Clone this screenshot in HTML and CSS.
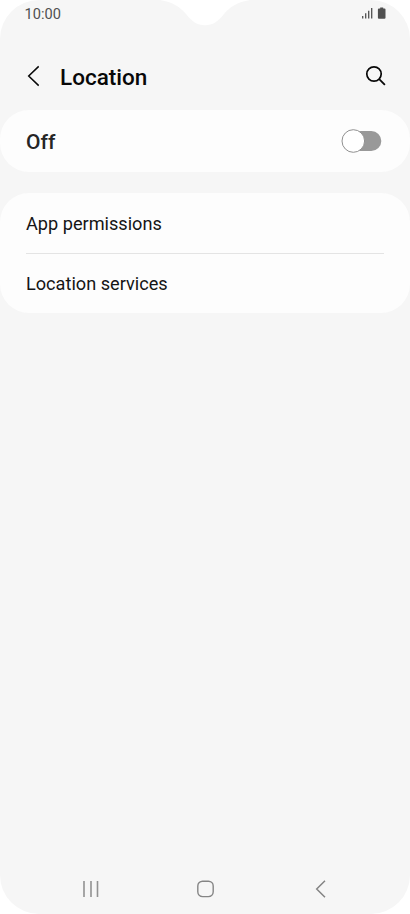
FILE: index.html
```html
<!DOCTYPE html>
<html lang="en">
<head>
<meta charset="utf-8">
<title>Location</title>
<link rel="stylesheet" href="styles.css">
</head>
<body>
<div class="screen">
  <svg class="notch" width="90" height="26" viewBox="0 0 90 26"><path d="M0 0C13 2 20 7 26 14C32 21.500 37 25.200 45 25.200C53 25.200 58 21.500 64 14C70 7 77 2 90 0Z" fill="#fff"/></svg>
  <header class="status">
    <span class="time">10:00</span>
    <svg class="status-icons" width="26" height="14" viewBox="0 0 26 14">
      <path d="M1.700 9v2.500M4.700 6.300v5.200M7.700 3.800v7.700M10.700 1v10.500" stroke="#505050" stroke-width="1.300"/>
      <path d="M19.200.5h3v1h1.300q1 0 1 1v8.300q0 1-1 1h-5.600q-1 0-1-1v-8.300q0-1 1-1h1.300z" fill="#505050"/>
    </svg>
  </header>
  <div class="titlebar">
    <svg class="back" width="14" height="22" viewBox="0 0 14 22"><path d="M11.700 1.400 1.700 11l10 9.600" fill="none" stroke="#080808" stroke-width="1.500"/></svg>
    <h1>Location</h1>
    <svg class="search" width="22" height="22" viewBox="0 0 22 22"><circle cx="9" cy="9" r="7.200" fill="none" stroke="#080808" stroke-width="1.700"/><path d="m14.200 14.200 5.700 5.700" stroke="#080808" stroke-width="1.800"/></svg>
  </div>
  <main>
    <section class="card switch-row">
      <span class="state">Off</span>
      <svg class="toggle" width="42" height="26" viewBox="0 0 42 26"><rect x="3" y="3" width="37.300" height="20" rx="10" fill="#999"/><circle cx="12.300" cy="13" r="11.300" fill="#fff" stroke="#909090"/></svg>
    </section>
    <section class="card list">
      <div class="row permissions">App permissions</div>
      <div class="row services">Location services</div>
    </section>
  </main>
  <nav class="navbar">
    <svg width="18" height="18" viewBox="0 0 18 18"><path d="M2 1v16M9 1v16M15.500 1v16" stroke="#929292" stroke-width="1.600"/></svg>
    <svg width="18" height="18" viewBox="0 0 18 18"><rect x=".8" y="1.200" width="15.400" height="15.400" rx="4.800" fill="none" stroke="#858585" stroke-width="1.400"/></svg>
    <svg width="18" height="18" viewBox="0 0 18 18"><path d="M13 .8 4.700 9l8.300 8.200" fill="none" stroke="#858585" stroke-width="1.500"/></svg>
  </nav>
</div>
</body>
</html>
```

FILE: styles.css
```css
* { box-sizing: border-box; }
body { margin: 0; background: #fff; font-family: Roboto, sans-serif; }
.screen {
  position: relative;
  display: flex;
  flex-direction: column;
  width: 410px;
  height: 914px;
  overflow: hidden;
  background: #f6f6f6;
  border-radius: 39px;
}
.notch { position: absolute; top: 0; left: 160px; }
.status {
  display: flex;
  justify-content: space-between;
  height: 42px;
  padding: 7px 23px 0 24.500px;
  color: #505050;
}
.time { font-size: 14.600px; line-height: 15px; }
.titlebar {
  display: flex;
  align-items: center;
  height: 68px;
  padding: 0 23px 0 27px;
}
h1 {
  margin: 1px auto 0 19px;
  font-size: 22.500px;
  line-height: 28px;
  font-weight: 500;
  color: #080808;
}
main { display: flex; flex-direction: column; gap: 21px; }
.card { background: #fdfdfd; border-radius: 29px; }
.switch-row {
  display: flex;
  align-items: center;
  justify-content: space-between;
  height: 62px;
  padding: 0 27px 0 26px;
}
.state { padding-top: 2px; font-size: 21px; font-weight: 500; color: #252525; }
.list { padding: 0 26px; }
.row {
  display: flex;
  align-items: center;
  font-size: 18.150px;
  color: #151515;
}
.permissions { height: 61px; border-bottom: 1px solid #e4e4e4; }
.services { height: 59px; }
.navbar {
  display: flex;
  justify-content: space-between;
  margin-top: auto;
  padding: 0 80px 16px 82px;
}
```
